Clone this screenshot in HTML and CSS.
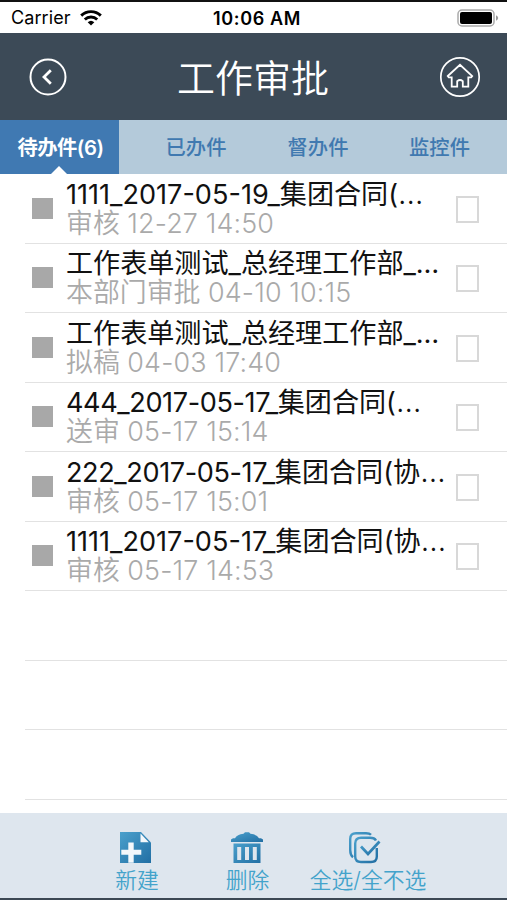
FILE: index.html
```html
<!DOCTYPE html>
<html lang="zh-CN">
<head>
  <meta charset="UTF-8">
  <meta name="viewport" content="width=device-width, initial-scale=1.0">
  <title>工作审批</title>
  <link rel="stylesheet" href="styles.css">
</head>
<body>
  <div class="status">
    <div class="carrier">
      <span>Carrier</span>
      <svg width="22" height="16" viewBox="0 0 22 16" fill="none" stroke="#000" stroke-width="2.9">
        <path d="M1.2 5.6a14 14 0 0 1 19.6 0"/>
        <path d="M4.8 9.5a9 9 0 0 1 12.4 0"/>
        <path d="M11 15.6l-3.3-3.4a4.8 4.8 0 0 1 6.6 0z" fill="#000" stroke="none"/>
      </svg>
    </div>
    <div class="clock">10:06 AM</div>
    <svg class="battery" width="42" height="18" viewBox="0 0 42 18">
      <rect x="1" y="1" width="36" height="16" rx="4" fill="none" stroke="#aaa" stroke-width="1.5"/>
      <rect x="3" y="3" width="32" height="12" rx="2" fill="#000"/>
      <path d="M39 6.2q2.2 1 2.2 2.8t-2.2 2.8z" fill="#999"/>
    </svg>
  </div>

  <header>
    <svg width="38" height="38" viewBox="0 0 38 38" fill="none" stroke="#fff">
      <circle cx="19" cy="19" r="17.5" stroke-width="2"/>
      <path d="M21.8 12.3L15 19l6.8 6.7" stroke-width="2.8"/>
    </svg>
    <h1>工作审批</h1>
    <svg width="42" height="42" viewBox="0 0 42 42" fill="none" stroke="#fff" stroke-width="1.7">
      <circle cx="21" cy="21" r="19.2"/>
      <path d="M8.8 20L21 8.8 33.2 20l-1 1.4h-2.900v9.200h-5.500v-5.400q-2.800-2.400-5.600 0v5.400h-5.500v-9.200H9.800z" stroke-width="1.8"/>
    </svg>
  </header>

  <nav>
    <div class="tab active">待办件(6)</div>
    <div class="tab">已办件</div>
    <div class="tab">督办件</div>
    <div class="tab">监控件</div>
  </nav>

  <ul class="list">
    <li class="row">
      <i class="mark"></i>
      <div class="text">
        <p class="title">1111_2017-05-19_集团合同(<span class="dots">…</span></p>
        <p class="info">审核 <span class="date">12-27 14:50</span></p>
      </div>
      <i class="check"></i>
    </li>
    <li class="row">
      <i class="mark"></i>
      <div class="text">
        <p class="title">工作表单测试_总经理工作部_…</p>
        <p class="info">本部门审批 <span class="date">04-10 10:15</span></p>
      </div>
      <i class="check"></i>
    </li>
    <li class="row">
      <i class="mark"></i>
      <div class="text">
        <p class="title">工作表单测试_总经理工作部_…</p>
        <p class="info">拟稿 <span class="date">04-03 17:40</span></p>
      </div>
      <i class="check"></i>
    </li>
    <li class="row">
      <i class="mark"></i>
      <div class="text">
        <p class="title"><span class="num">444_2017-05-17_</span>集团合同(<span class="dots">…</span></p>
        <p class="info">送审 <span class="date">05-17 15:14</span></p>
      </div>
      <i class="check"></i>
    </li>
    <li class="row">
      <i class="mark"></i>
      <div class="text">
        <p class="title"><span class="num">222_2017-05-17_</span>集团合同(协<span class="dots">…</span></p>
        <p class="info">审核 <span class="date">05-17 15:01</span></p>
      </div>
      <i class="check"></i>
    </li>
    <li class="row">
      <i class="mark"></i>
      <div class="text">
        <p class="title">1111_2017-05-17_集团合同(协<span class="dots">…</span></p>
        <p class="info">审核 <span class="date">05-17 14:53</span></p>
      </div>
      <i class="check"></i>
    </li>
    <li class="row"></li>
    <li class="row"></li>
    <li class="row"></li>
  </ul>

  <footer>
    <svg width="0" height="0" class="defs">
      <linearGradient id="blue" x1="0" y1="0" x2="1" y2="1">
        <stop offset="0" stop-color="#4aa0cc"/>
        <stop offset="1" stop-color="#226fa4"/>
      </linearGradient>
    </svg>
    <div class="tool">
      <svg width="32" height="32" viewBox="0 0 32 32">
        <path d="M0 0h21l10 10.500v20.500h-31z" fill="url(#blue)"/>
        <path d="M20.500 1.500v8.700h8.300z" fill="#f4f8fb"/>
        <path d="M8.300 10.500h5.400v7.200h7.600v5h-7.600v8h-5.400v-8h-7v-5h7z" fill="#f4f8fb"/>
      </svg>
      <span>新建</span>
    </div>
    <div class="tool">
      <svg width="32" height="32" viewBox="0 0 32 32">
        <path d="M0 10V7.500l2-1.300h2Q6 2.500 12.500 1.700L14 .3h4l1.500 1.400Q26 2.500 28 6.200h2l2 1.300V10z" fill="url(#blue)"/>
        <path fill-rule="evenodd" d="M2.500 11.500h27V31h-27zM6.200 15v13h4V15zM14 15v13h4V15zM21.800 15v13h4V15z" fill="url(#blue)"/>
      </svg>
      <span>删除</span>
    </div>
    <div class="tool select-all">
      <svg width="32" height="32" viewBox="0 0 32 32" fill="none" stroke="url(#blue)" stroke-width="2.4">
        <path d="M22 2.800Q20.500 1.200 17 1.200H7Q1.200 1.200 1.200 7v11Q1.200 23 4 25.200"/>
        <path d="M27 8.500Q25.500 5.800 21 5.800h-9Q6.200 5.800 6.200 11.500v13q0 5.500 5.800 5.500h10q5.800 0 5.800-5.500V16"/>
        <path d="M12 14.500l7 7.500L30.500 9.500" stroke-width="2.700"/>
      </svg>
      <span>全选/全不选</span>
    </div>
  </footer>
</body>
</html>
```
FILE: styles.css
```css
* {
  box-sizing: border-box;
  margin: 0;
  padding: 0;
}
body {
  height: 900px;
  display: flex;
  flex-direction: column;
  overflow: hidden;
  border-top: 2px solid #111;
  border-bottom: 2px solid #3c4854;
  background-color: white;
  font-family: Inter, "Noto Sans CJK SC", sans-serif;
}
svg {
  display: block;
}
.status {
  height: 31px;
  display: grid;
  grid-template-columns: 1fr auto 1fr;
  align-items: center;
  padding: 0 8px 0 11px;
  font-size: 18px;
}
.carrier {
  display: flex;
  align-items: center;
  gap: 9px;
  letter-spacing: 0.1px;
}
.clock {
  padding: 2px 0 0 4px;
  font-weight: 600;
  letter-spacing: 0.65px;
}
.battery {
  justify-self: end;
}

header {
  height: 87px;
  display: flex;
  align-items: center;
  justify-content: space-between;
  padding: 0 26px 0 29px;
  background-color: #3c4a57;
  color: white;
}
header h1 {
  padding-top: 3px;
  font-size: 38px;
  font-weight: 350;
  line-height: 50px;
}

nav {
  height: 54px;
  display: grid;
  grid-template-columns: 119px 154px 90px 1fr;
  background-color: #b4cada;
  color: #4079b0;
}
.tab {
  position: relative;
  height: 54px;
  padding-top: 2px;
  text-align: center;
  font-size: 20.3px;
  font-weight: 500;
  line-height: 52px;
}
.tab:last-child {
  padding-left: 9px;
}
.tab.active {
  padding-left: 2px;
  background-color: #4079b2;
  color: white;
  font-weight: 600;
  letter-spacing: -0.5px;
}
.tab.active::after {
  content: "";
  position: absolute;
  left: 51px;
  bottom: 0;
  border: 8px solid transparent;
  border-top: 0;
  border-bottom-color: white;
}

.list {
  flex: 1;
  list-style: none;
}
.row {
  height: 69.5px;
  margin-left: 25px;
  display: flex;
  align-items: center;
  border-bottom: 1px solid #e2e2e2;
}
.mark {
  width: 21px;
  height: 21px;
  margin: 0 13px 0 7px;
  background-color: #a8a8a8;
}
.text {
  width: 390px;
  padding-top: 1px;
  white-space: nowrap;
  font-size: 27.1px;
  line-height: 28px;
}
.title {
  color: #111;
}
.num {
  letter-spacing: -0.4px;
}
.dots {
  font-size: 30px;
  font-weight: 300;
  line-height: 0;
}
.info {
  color: #aaa;
  font-size: 26.9px;
  font-weight: 350;
}
.date {
  letter-spacing: 0.15px;
}
.check {
  width: 23px;
  height: 27px;
  margin-top: 2px;
  border: 2px solid #d8d8d8;
}

footer {
  height: 85px;
  display: grid;
  grid-template-columns: 110px 111px 130px;
  padding-left: 82px;
  background-color: #dee6ee;
  color: #43a3cb;
  font-size: 21.8px;
  font-weight: 350;
}
.defs {
  position: absolute;
}
.tool {
  display: flex;
  flex-direction: column;
  align-items: center;
  padding-top: 19px;
}
.tool svg {
  margin-right: 2px;
}
.tool span {
  line-height: 32px;
}
.select-all svg {
  margin-right: 6px;
}
```
